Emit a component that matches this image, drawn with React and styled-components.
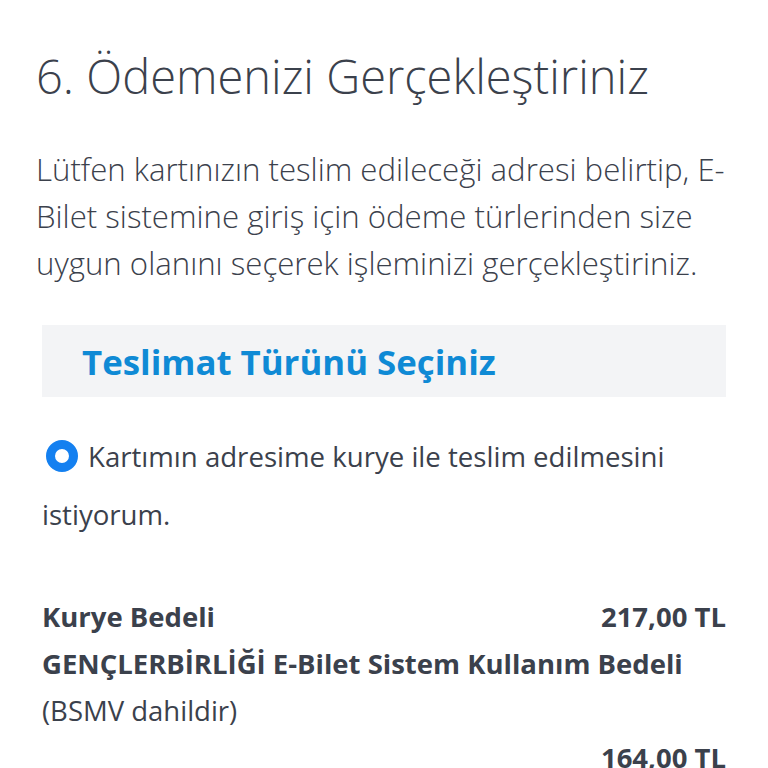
import React from "react"
import styled, { createGlobalStyle } from "styled-components"

const GlobalStyle = createGlobalStyle`
  body {
    margin: 0;
    background: #ffffff;
    font-family: "Open Sans", "Noto Sans", sans-serif;
    color: #3b414c;
  }
`

const Page = styled.div`
  padding: 44px 36px 0 36px;
  width: 768px;
  box-sizing: border-box;
  overflow: hidden;
  height: 768px;
`

const Title = styled.h1`
  margin: 0;
  font-size: 47px;
  font-weight: 300;
  line-height: 64px;
`

const Lead = styled.p`
  margin: 38px -10px 0 0;
  font-size: 31.2px;
  font-weight: 300;
  line-height: 47px;
`

const Section = styled.div`
  margin: 38px 6px 0 6px;
`

const SectionHead = styled.div`
  background: #f3f4f6;
  height: 72px;
  display: flex;
  align-items: center;
  padding: 0 40px;
`

const SectionTitle = styled.h2`
  margin: 0;
  font-size: 34.8px;
  font-weight: 700;
  color: #0f8ad5;
`

const Choice = styled.label`
  display: block;
  margin-top: 30px;
  font-size: 27.6px;
  line-height: 58px;
`

const Radio = styled.span`
  display: inline-block;
  width: 32px;
  height: 32px;
  border-radius: 50%;
  border: 9px solid #1480f0;
  box-sizing: border-box;
  background: #fff;
  vertical-align: -5px;
  margin: 0 10px 0 4px;
`

const Fees = styled.div`
  margin-top: 50px;
  font-size: 27.5px;
  line-height: 47px;
`

const FeeRow = styled.div`
  display: flex;
  justify-content: space-between;
  font-weight: ${(p) => (p.$bold ? 700 : 400)};
`

const Note = styled.div`
  font-weight: 400;
`

const Amount = styled.div`
  text-align: right;
  font-weight: 700;
`

export default function App() {
  return (
    <>
      <GlobalStyle />
      <Page>
        <Title>6. Ödemenizi Gerçekleştiriniz</Title>
        <Lead>
          Lütfen kartınızın teslim edileceği adresi belirtip, E-Bilet sistemine giriş için ödeme
          türlerinden size uygun olanını seçerek işleminizi gerçekleştiriniz.
        </Lead>
        <Section>
          <SectionHead>
            <SectionTitle>Teslimat Türünü Seçiniz</SectionTitle>
          </SectionHead>
          <Choice>
            <Radio />
            Kartımın adresime kurye ile teslim edilmesini istiyorum.
          </Choice>
          <Fees>
            <FeeRow $bold>
              <span>Kurye Bedeli</span>
              <span>217,00 TL</span>
            </FeeRow>
            <FeeRow $bold>
              <span>GENÇLERBİRLİĞİ E-Bilet Sistem Kullanım Bedeli</span>
            </FeeRow>
            <Note>(BSMV dahildir)</Note>
            <Amount>164,00 TL</Amount>
          </Fees>
        </Section>
      </Page>
    </>
  )
}
